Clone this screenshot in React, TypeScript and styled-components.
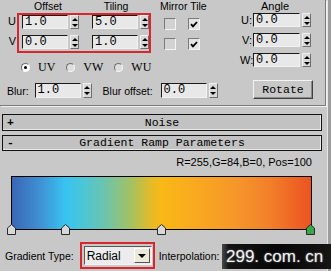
import React from 'react'
import styled, { createGlobalStyle } from 'styled-components'

const GlobalStyle = createGlobalStyle`
  html, body {
    margin: 0;
    padding: 0;
    background: #c8c8c8;
  }
  body {
    width: 331px;
    height: 271px;
    overflow: hidden;
  }
`

const Panel = styled.div`
  position: relative;
  width: 331px;
  height: 271px;
  display: flex;
  background: #c8c8c8;
  font-family: 'Liberation Sans', Arial, sans-serif;
  font-size: 10.5px;
  color: #000;
  overflow: hidden;
`

const Main = styled.div`
  width: 327px;
  display: flex;
  flex-direction: column;
`

const Strip = styled.div`
  flex: 1;
  background: #9c9c9c;
  border-left: 1px solid #e6e6e6;
`

const TopGroup = styled.div`
  width: 325px;
  height: 105px;
  display: flex;
  border-right: 1px solid #7a7a7a;
  border-bottom: 1px solid #7a7a7a;
  box-shadow: 1px 1px 0 #f2f2f2;
`

const LeftBlock = styled.div`
  width: 232px;
  display: flex;
  flex-direction: column;
`

const HeadRow = styled.div`
  display: flex;
  height: 12px;
  line-height: 12px;
`

const HeadLabel = styled.span<{ $w: number; $align?: string; $pl?: number }>`
  width: ${p => p.$w}px;
  text-align: ${p => p.$align ?? 'center'};
  padding-left: ${p => p.$pl ?? 0}px;
  white-space: nowrap;
`

const FieldsRow = styled.div`
  display: flex;
  margin-top: 1px;
`

const AxisCol = styled.div`
  width: 17px;
  display: flex;
  flex-direction: column;
  gap: 7px;
  padding-top: 2px;
  line-height: 13px;
  text-align: right;
  box-sizing: border-box;
  padding-right: 1px;
  font-size: 11px;
`

const RedBox = styled.div`
  border: 2px solid #d8262e;
  padding: 0 0 2px 3px;
  display: grid;
  grid-template-columns: 57px 57px;
  column-gap: 13px;
  row-gap: 6px;
`

const CheckCol = styled.div`
  display: grid;
  grid-template-columns: 12px 12px;
  column-gap: 12px;
  row-gap: 8px;
  margin-left: 13px;
  padding-top: 5px;
  align-content: start;
`

const CheckBox = styled.div<{ $on?: boolean }>`
  width: 12px;
  height: 12px;
  box-sizing: border-box;
  border-top: 1px solid #7a7a7a;
  border-left: 1px solid #7a7a7a;
  border-right: 1px solid #f4f4f4;
  border-bottom: 1px solid #f4f4f4;
  background: ${p => (p.$on ? '#e4e4e4' : '#d2d2d2')};
  display: flex;
  align-items: center;
  justify-content: center;
`

const SpinWrap = styled.div`
  display: flex;
  gap: 2px;
`

const Field = styled.div<{ $w: number; $h?: number }>`
  width: ${p => p.$w}px;
  height: ${p => p.$h ?? 14}px;
  box-sizing: border-box;
  background: #e8e8e8;
  border-top: 1px solid #1a1a1a;
  border-left: 1px solid #1a1a1a;
  border-right: 1px solid #f2f2f2;
  border-bottom: 1px solid #f2f2f2;
  font-family: 'Liberation Mono', monospace;
  font-size: 12px;
  line-height: ${p => (p.$h ?? 14) - 2}px;
  padding-left: 2px;
  overflow: hidden;
`

const Spinner = styled.div<{ $h?: number }>`
  width: 9px;
  height: ${p => p.$h ?? 14}px;
  box-sizing: border-box;
  background: #d8d8d8;
  border-top: 1px solid #f0f0f0;
  border-left: 1px solid #f0f0f0;
  border-right: 1px solid #6e6e6e;
  border-bottom: 1px solid #6e6e6e;
  display: flex;
  flex-direction: column;
  justify-content: space-around;
  align-items: center;
`

const Arrow = styled.div<{ $up?: boolean }>`
  width: 0;
  height: 0;
  border-left: 3px solid transparent;
  border-right: 3px solid transparent;
  ${p => (p.$up ? 'border-bottom: 3px solid #000;' : 'border-top: 3px solid #000;')}
`

const RadioRow = styled.div`
  display: flex;
  gap: 11px;
  margin-top: 9px;
  padding-left: 21px;
  height: 11px;
  align-items: center;
`

const RadioItem = styled.div`
  display: flex;
  align-items: center;
  gap: 8px;
  font-family: 'Liberation Serif', serif;
  font-size: 12px;
`

const RadioDot = styled.div<{ $on?: boolean }>`
  width: 9px;
  height: 9px;
  box-sizing: border-box;
  border-radius: 50%;
  border-top: 1px solid #707070;
  border-left: 1px solid #707070;
  border-right: 1px solid #f6f6f6;
  border-bottom: 1px solid #f6f6f6;
  background: ${p => (p.$on ? '#fafafa' : '#dedede')};
  display: flex;
  align-items: center;
  justify-content: center;
  &::after {
    content: '';
    width: 3px;
    height: 3px;
    border-radius: 50%;
    background: ${p => (p.$on ? '#000' : 'transparent')};
  }
`

const BlurRow = styled.div`
  display: flex;
  align-items: center;
  margin-top: 10px;
  padding-left: 7px;
`

const Label = styled.span<{ $ml?: number }>`
  margin-left: ${p => p.$ml ?? 0}px;
  white-space: nowrap;
`

const AngleBlock = styled.div`
  display: flex;
  flex-direction: column;
  align-items: flex-start;
  padding-left: 8px;
`

const AngleHead = styled.div`
  width: 70px;
  height: 12px;
  line-height: 12px;
  text-align: center;
  font-size: 11px;
`

const AngleRows = styled.div`
  display: flex;
  flex-direction: column;
  gap: 6px;
  margin-top: 1px;
`

const AngleRow = styled.div`
  display: flex;
  align-items: center;
`

const AngleLabel = styled.span`
  width: 12px;
  text-align: right;
  margin-right: 1px;
  font-size: 11px;
`

const RotateBtn = styled.div`
  margin: 13px 0 0 13px;
  width: 60px;
  height: 19px;
  box-sizing: border-box;
  border-top: 1px solid #f4f4f4;
  border-left: 1px solid #f4f4f4;
  border-right: 1px solid #404040;
  border-bottom: 1px solid #404040;
  box-shadow: inset -1px -1px 0 #8a8a8a;
  display: flex;
  align-items: center;
  justify-content: center;
  font-family: 'Liberation Mono', monospace;
  font-size: 11.5px;
`

const Bars = styled.div`
  display: flex;
  flex-direction: column;
  gap: 4px;
  margin: 8px 5px 0 2px;
`

const RollBar = styled.div<{ $h: number }>`
  height: ${p => p.$h}px;
  box-sizing: border-box;
  border: 1px solid #121212;
  background: #c2c2c2;
  box-shadow: inset -1px -1px 0 #e8e8e8;
  display: grid;
  grid-template-columns: 16px 1fr 16px;
  align-items: center;
  font-family: 'Liberation Mono', monospace;
  font-size: 11.5px;
  line-height: 12px;
`

const BarSign = styled.span`
  padding-left: 4px;
  font-weight: bold;
`

const BarTitle = styled.span`
  text-align: center;
`

const ColorInfo = styled.div`
  margin-top: 5px;
  padding-right: 15px;
  text-align: right;
  line-height: 13px;
  font-size: 11px;
`

const GradTrack = styled.div`
  position: relative;
  margin: 7px 0 0 11px;
  width: 301px;
  height: 54px;
  box-sizing: border-box;
  border: 1px solid #000;
  background: linear-gradient(
    to right,
    #3a66b6 0%,
    #3f8fd2 9%,
    #38c4f0 18%,
    #4cc6d4 24%,
    #6cc4ae 31%,
    #a6c160 40%,
    #e0bb2c 46%,
    #fbb816 50%,
    #f9a820 62%,
    #f6962a 75%,
    #f2802a 86%,
    #ec5322 100%
  );
`

const Marker = styled.svg`
  position: absolute;
  top: 47px;
  width: 9px;
  height: 11px;
`

const BottomRow = styled.div`
  display: flex;
  align-items: center;
  margin-top: 12px;
  padding-left: 5px;
`

const SelectBox = styled.div`
  margin-left: 6px;
  border: 2px solid #d8262e;
  padding: 2px 1px 2px 2px;
`

const Select = styled.div`
  width: 68px;
  height: 19px;
  box-sizing: border-box;
  background: #ececec;
  border-top: 1px solid #5a5a5a;
  border-left: 1px solid #5a5a5a;
  border-right: 1px solid #f4f4f4;
  border-bottom: 1px solid #f4f4f4;
  display: flex;
  align-items: center;
  justify-content: space-between;
  padding: 0 1px 0 2px;
  font-size: 12px;
`

const DropBtn = styled.div`
  width: 16px;
  height: 15px;
  box-sizing: border-box;
  background: #ece9d8;
  border-top: 1px solid #fff;
  border-left: 1px solid #fff;
  border-right: 1px solid #555;
  border-bottom: 1px solid #555;
  display: flex;
  align-items: center;
  justify-content: center;
  &::after {
    content: '';
    border-left: 4px solid transparent;
    border-right: 4px solid transparent;
    border-top: 4px solid #000;
  }
`

const Watermark = styled.div`
  position: absolute;
  right: 0;
  bottom: 2px;
  width: 109px;
  height: 25px;
  background: linear-gradient(to right, #4a4a4a 0%, #141414 6%, #060606 50%, #151515 100%);
  color: #f2f2f2;
  font-family: 'Liberation Sans', Arial, sans-serif;
  font-size: 17px;
  line-height: 25px;
  padding-left: 4px;
  box-sizing: border-box;
  white-space: nowrap;
  text-shadow: 0 0 2px rgba(255, 255, 255, 0.5);
`

const SpinField = ({ value, w = 46, h = 14 }: { value: string; w?: number; h?: number }) => (
  <SpinWrap>
    <Field $w={w} $h={h}>{value}</Field>
    <Spinner $h={h}>
      <Arrow $up />
      <Arrow />
    </Spinner>
  </SpinWrap>
)

const Check = () => (
  <svg width="8" height="7" viewBox="0 0 8 7">
    <path d="M1 3.2 L3 5.4 L7 1" fill="none" stroke="#000" strokeWidth="1.8" />
  </svg>
)

const stops = [
  { pos: 0, color: '#d8d8d8' },
  { pos: 18, color: '#d8d8d8' },
  { pos: 50, color: '#d8d8d8' },
  { pos: 100, color: '#3aa64a' },
]

export default function App() {
  return (
    <Panel>
      <GlobalStyle />
      <Main>
        <TopGroup>
          <LeftBlock>
            <HeadRow>
              <HeadLabel $w={19} />
              <HeadLabel $w={58}>Offset</HeadLabel>
              <HeadLabel $w={78}>Tiling</HeadLabel>
              <HeadLabel $w={70} $align="left" $pl={5}>Mirror Tile</HeadLabel>
            </HeadRow>
            <FieldsRow>
              <AxisCol>
                <span>U</span>
                <span>V</span>
              </AxisCol>
              <RedBox>
                <SpinField value="1.0" />
                <SpinField value="5.0" />
                <SpinField value="0.0" />
                <SpinField value="1.0" />
              </RedBox>
              <CheckCol>
                <CheckBox />
                <CheckBox $on><Check /></CheckBox>
                <CheckBox />
                <CheckBox $on><Check /></CheckBox>
              </CheckCol>
            </FieldsRow>
            <RadioRow>
              <RadioItem><RadioDot $on />UV</RadioItem>
              <RadioItem><RadioDot />VW</RadioItem>
              <RadioItem><RadioDot />WU</RadioItem>
            </RadioRow>
            <BlurRow>
              <Label>Blur:</Label>
              <Label $ml={6} />
              <SpinField value="1.0" h={15} />
              <Label $ml={11}>Blur offset:</Label>
              <Label $ml={8} />
              <SpinField value="0.0" h={15} />
            </BlurRow>
          </LeftBlock>
          <AngleBlock>
            <AngleHead>Angle</AngleHead>
            <AngleRows>
              {['U:', 'V:', 'W:'].map(a => (
                <AngleRow key={a}>
                  <AngleLabel>{a}</AngleLabel>
                  <SpinField value="0.0" w={47} />
                </AngleRow>
              ))}
            </AngleRows>
            <RotateBtn>Rotate</RotateBtn>
          </AngleBlock>
        </TopGroup>

        <Bars>
          <RollBar $h={17}>
            <BarSign>+</BarSign>
            <BarTitle>Noise</BarTitle>
          </RollBar>
          <RollBar $h={16}>
            <BarSign>-</BarSign>
            <BarTitle>Gradient Ramp Parameters</BarTitle>
          </RollBar>
        </Bars>

        <ColorInfo>R=255,G=84,B=0, Pos=100</ColorInfo>

        <GradTrack>
          {stops.map(s => (
            <Marker
              key={s.pos}
              viewBox="0 0 9 11"
              style={{ left: `calc(${s.pos}% - 5px)` }}
            >
              <polygon
                points="0.5,10.5 0.5,4 4.5,0.5 8.5,4 8.5,10.5"
                fill={s.color}
                stroke="#2a2a2a"
                strokeWidth="1"
              />
            </Marker>
          ))}
        </GradTrack>

        <BottomRow>
          <Label>Gradient Type:</Label>
          <SelectBox>
            <Select>
              <span>Radial</span>
              <DropBtn />
            </Select>
          </SelectBox>
          <Label $ml={4}>Interpolation:</Label>
        </BottomRow>
      </Main>
      <Strip />
      <Watermark>299. com. cn</Watermark>
    </Panel>
  )
}
